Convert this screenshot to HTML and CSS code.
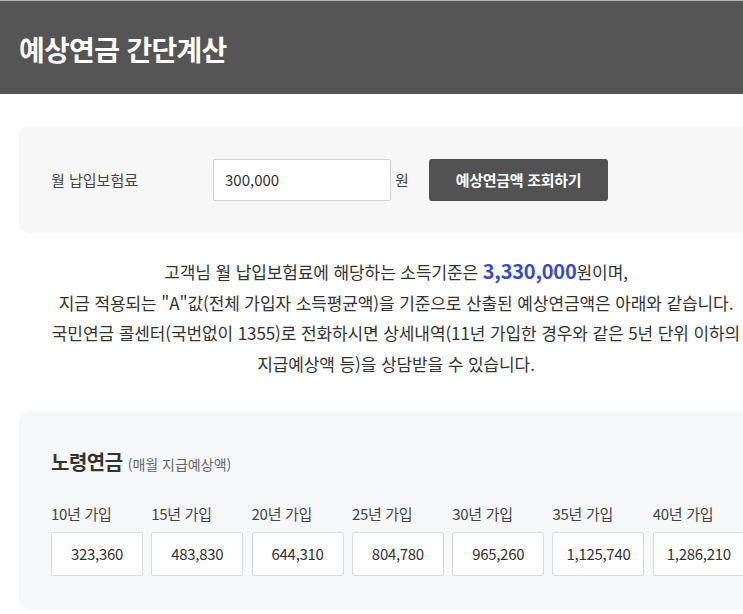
FILE: index.html
```html
<!DOCTYPE html>
<html lang="ko">
<head>
<meta charset="utf-8">
<title>예상연금 간단계산</title>
<link rel="stylesheet" href="styles.css">
</head>
<body>
<header class="top">
  <h1 class="top-title">예상연금 간단계산</h1>
</header>
<main class="content">
  <section class="calc">
    <span class="calc-label">월 납입보험료</span>
    <input class="calc-input" type="text" value="300,000">
    <span class="calc-unit">원</span>
    <button class="calc-btn" type="button">예상연금액 조회하기</button>
  </section>
  <p class="notice">
    고객님 월 납입보험료에 해당하는 소득기준은 <strong class="amount">3,330,000</strong>원이며,<br>
    지금 적용되는 "A"값(전체 가입자 소득평균액)을 기준으로 산출된 예상연금액은 아래와 같습니다.<br>
    국민연금 콜센터(국번없이 1355)로 전화하시면 상세내역(11년 가입한 경우와 같은 5년 단위 이하의<br>
    지급예상액 등)을 상담받을 수 있습니다.
  </p>
  <section class="result">
    <h2 class="result-title">노령연금 <span class="result-sub">(매월 지급예상액)</span></h2>
    <div class="result-grid">
      <div class="result-item"><div class="result-label">10년 가입</div><div class="result-box">323,360</div></div>
      <div class="result-item"><div class="result-label">15년 가입</div><div class="result-box">483,830</div></div>
      <div class="result-item"><div class="result-label">20년 가입</div><div class="result-box">644,310</div></div>
      <div class="result-item"><div class="result-label">25년 가입</div><div class="result-box">804,780</div></div>
      <div class="result-item"><div class="result-label">30년 가입</div><div class="result-box">965,260</div></div>
      <div class="result-item"><div class="result-label">35년 가입</div><div class="result-box">1,125,740</div></div>
      <div class="result-item"><div class="result-label">40년 가입</div><div class="result-box">1,286,210</div></div>
    </div>
  </section>
</main>
</body>
</html>
```

FILE: styles.css
```css
html, body {
  margin: 0;
  padding: 0;
  overflow: hidden;
  background: #ffffff;
}
body {
  font-family: "Noto Sans CJK KR", "Noto Sans", sans-serif;
  color: #333;
}
.top {
  background: #545554;
  border-top: 1px solid #b5b5b5;
  height: 93px;
  display: flex;
  align-items: center;
  padding: 0 19px;
}
.top-title {
  margin: 0;
  color: #fff;
  font-size: 28px;
  font-weight: 700;
  letter-spacing: -0.7px;
  line-height: 1;
  padding-top: 2px;
}
.content {
  width: 754px;
  margin: 32px 0 0 19px;
}
.calc {
  background: #f7f7f7;
  border-radius: 10px;
  height: 107px;
  box-sizing: border-box;
  display: flex;
  align-items: center;
  padding: 0 32px;
}
.calc-label {
  width: 162px;
  font-size: 15px;
  color: #444;
}
.calc-input {
  width: 178px;
  height: 42px;
  box-sizing: border-box;
  border: 1px solid #d4d4d4;
  border-radius: 2px;
  background: #fff;
  padding: 0 11px;
  font-family: inherit;
  font-size: 15px;
  color: #333;
  outline: none;
}
.calc-unit {
  font-size: 15px;
  color: #444;
  margin-left: 4px;
  width: 34px;
}
.calc-btn {
  width: 179px;
  height: 42px;
  border: 0;
  border-radius: 3px;
  background: #525252;
  color: #fff;
  font-family: inherit;
  font-size: 15px;
  font-weight: 700;
  letter-spacing: -0.3px;
  cursor: pointer;
}
.notice {
  margin: 24px 0 0;
  text-align: center;
  font-size: 17px;
  line-height: 30.7px;
  color: #333;
  letter-spacing: -0.1px;
}
.amount {
  color: #3a4bbf;
  font-size: 20px;
  font-weight: 700;
  line-height: 1;
  letter-spacing: -0.2px;
}
.result {
  margin-top: 32px;
  background: #f7f8fa;
  border-radius: 10px;
  padding: 36px 32px 33px;
}
.result-title {
  margin: 0;
  font-size: 20px;
  font-weight: 700;
  line-height: 28px;
  color: #333;
  letter-spacing: -0.5px;
}
.result-sub {
  font-size: 14px;
  font-weight: 400;
  color: #666;
  letter-spacing: 0;
}
.result-grid {
  margin-top: 25px;
  display: grid;
  grid-template-columns: repeat(7, 92px);
  column-gap: 8.3px;
}
.result-label {
  font-size: 15px;
  line-height: 22px;
  color: #444;
  letter-spacing: -0.3px;
}
.result-box {
  margin-top: 7px;
  height: 44px;
  box-sizing: border-box;
  background: #fff;
  border: 1px solid #dcdcdc;
  border-radius: 2px;
  display: flex;
  align-items: center;
  justify-content: center;
  font-size: 15px;
  color: #333;
  letter-spacing: -0.3px;
}
```
